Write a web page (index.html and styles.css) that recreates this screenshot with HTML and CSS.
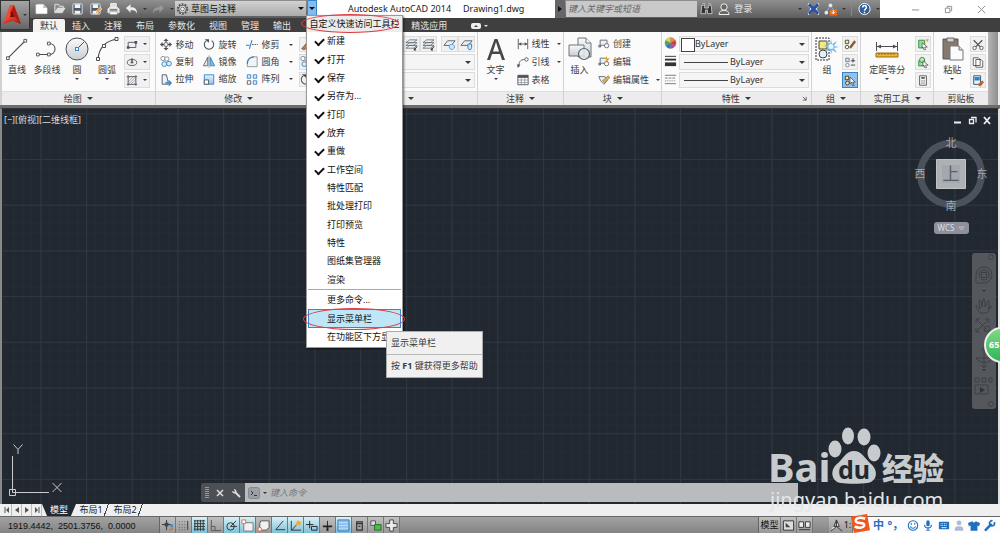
FILE: index.html
```html
<!DOCTYPE html>
<html lang="zh-CN">
<head>
<meta charset="utf-8">
<title>Autodesk AutoCAD 2014 Drawing1.dwg</title>
<link rel="stylesheet" href="styles.css">
</head>
<body>
<svg class="defs" aria-hidden="true">
  <defs>
    <linearGradient id="blue" x2="0" y2="1"><stop offset="0" stop-color="#e6f2fb"/><stop offset="1" stop-color="#8fc4ea"/></linearGradient>
    <linearGradient id="steel" x2="0" y2="1"><stop offset="0" stop-color="#fafafa"/><stop offset="1" stop-color="#c9cdd2"/></linearGradient>
    <linearGradient id="red" x2="1" y2="1"><stop offset="0" stop-color="#f4513a"/><stop offset="1" stop-color="#a3140c"/></linearGradient>
    <symbol id="new" viewBox="0 0 14 14"><path d="M2 2h7l4 4v6H1V3z" fill="#fff" stroke="#ddd" stroke-width=".6"/><path d="M9 2v4h4" fill="#bbb"/></symbol>
    <symbol id="open" viewBox="0 0 14 14"><path d="M2 11V2h4l1 2h4v2" fill="#888" stroke="#e8e8e8"/><path d="M2 11l3-5h8l-3 5z" fill="#d5dce4" stroke="#eee" stroke-width=".6"/></symbol>
    <symbol id="save" viewBox="0 0 14 14"><rect x="2" y="1.500" width="10" height="11" rx="1" fill="#4d5a6c" stroke="#e8e8e8"/><path d="M4 2h6v4H4zM4 9h6v3H4z" fill="#f3f3f3"/></symbol>
    <symbol id="saveas" viewBox="0 0 14 14"><use href="#save"/><path d="M7 12l1-3 4-4 2 2-4 4z" fill="#f2a33a" stroke="#fff" stroke-width=".5"/></symbol>
    <symbol id="print" viewBox="0 0 14 14"><path d="M4 5V1h6v4M3 5h8l2 2v4H1V7z" fill="#ddd" stroke="#fff" stroke-width=".8"/><path d="M3 8h8" stroke="#333"/><path d="M3 10h8v3H3z" fill="#fff" stroke="#777" stroke-width=".5"/></symbol>
    <symbol id="undo" viewBox="0 0 14 14"><path d="M1 6l5-4v3c5 0 7 2 7 7-1-3-3-4-7-4v3z" fill="#e9edf2"/></symbol>
    <symbol id="redo" viewBox="0 0 14 14"><path d="M13 6L8 2v3c-5 0-7 2-7 7 1-3 3-4 7-4v3z" fill="#969696"/></symbol>
    <symbol id="gear" viewBox="0 0 14 14"><circle cx="7" cy="7" r="5" fill="#eee" stroke="#555" stroke-width="2.200" stroke-dasharray="2 1.140"/><circle cx="7" cy="7" r="4" fill="#eee" stroke="#555"/><circle cx="7" cy="7" r="2" fill="#fff" stroke="#666"/></symbol>
    <symbol id="bino" viewBox="0 0 14 14"><path d="M2 3h3v3h4V3h3l1 9H8V8H6v4H1zM3 1h2v2M9 1h2v2" fill="#333" stroke="#ddd" stroke-width=".8"/></symbol>
    <symbol id="user" viewBox="0 0 14 14"><circle cx="7" cy="5" r="3.200" fill="#666" stroke="#eee"/><path d="M2 12.500c0-3 2-4 5-4s5 1 5 4z" fill="#666" stroke="#eee"/></symbol>
    <symbol id="exchange" viewBox="0 0 14 14"><path d="M1 2c5 1 5 9 0 10M13 2c-5 1-5 9 0 10" fill="none" stroke="#e4ecf8" stroke-width="3"/><path d="M2 2l10 10M12 2L2 12" stroke="#2851a0" stroke-width="3"/></symbol>
    <symbol id="share" viewBox="0 0 14 14"><path d="M2 11L7 3l3 5" stroke="#8ab6e8" fill="none"/><circle cx="7" cy="3" r="2" fill="#dce9f8"/><circle cx="2.500" cy="11" r="2" fill="#dce9f8"/><path d="M6 7h8v7H6z" fill="#e86a1c"/><path d="M10 8v4M8 10l2 2 2-2" stroke="#fff" fill="none"/></symbol>
    <symbol id="help" viewBox="0 0 14 14"><circle cx="7" cy="7" r="6" fill="#2e5d9e" stroke="#fff"/><path d="M5 5.500c0-3 4-3 4-.5C9 7 7 7 7 9M7 10v1.500" fill="none" stroke="#fff" stroke-width="1.600"/></symbol>

    <symbol id="line" viewBox="0 0 24 24"><path d="M2 22L21 3" stroke="#4b5056" stroke-width="1.200"/><path d="M.5 20.500h3v3h-3zM19.500 1.500h3v3h-3z" fill="#fff" stroke="#4b5056"/></symbol>
    <symbol id="pline" viewBox="0 0 24 24"><path d="M2 18h12c9 0 9-12 0-12" fill="none" stroke="#4b5056" stroke-width="1.200"/><path d="M.5 16.500h3v3h-3zM12.500 16.500h3v3h-3zM12.500 4.500h3v3h-3z" fill="#fff" stroke="#4b5056"/></symbol>
    <symbol id="circle" viewBox="0 0 24 24"><circle cx="12" cy="12" r="11" fill="url(#steel)" stroke="#4b5056"/><path d="M12 12l7-7" stroke="#4b5056"/><rect x="10.500" y="10.500" width="3" height="3" fill="#fff" stroke="#3b83c4"/></symbol>
    <symbol id="arc" viewBox="0 0 24 24"><path d="M3 22C4 11 10 4 22 2" fill="none" stroke="#4b5056" stroke-width="1.200"/><path d="M1.500 20.500h3v3h-3zM20 .5h3v3h-3zM7.500 7.500h3v3h-3z" fill="#fff" stroke="#4b5056"/></symbol>
    <symbol id="rect" viewBox="0 0 14 14"><path d="M2.500 4.500h9v6h-9z" fill="#edf0f2" stroke="#4b5056"/><path d="M1 9h3v3H1zM10 3h3v3h-3z" fill="#4b5056"/></symbol>
    <symbol id="ellipse" viewBox="0 0 14 14"><ellipse cx="7" cy="7" rx="5.500" ry="3.500" fill="#edf0f2" stroke="#4b5056"/><path d="M7 2v6M5.500 7h3" stroke="#4b5056" stroke-width="1.500"/></symbol>
    <symbol id="hatch" viewBox="0 0 14 14"><path d="M2 5l3-3M2 9l7-7M2 12L12 2M5 12l7-7M9 12l3-3" stroke="#89909a" stroke-width=".8"/><path d="M2.500 1v12M11.500 1v12M1 2.500h12M1 11.500h12" stroke="#4b5056" fill="none"/></symbol>
    <symbol id="move" viewBox="0 0 14 14"><path d="M7 2v10M2 7h10" stroke="#4b5056" stroke-width="1.500"/><path d="M7 0l3 3H4zM7 14l3-3H4zM0 7l3-3v6zM14 7l-3-3v6z" fill="#4b5056"/><path d="M5 5h4v4H5z" fill="#fff" stroke="#4b5056" stroke-width=".7"/></symbol>
    <symbol id="rotate" viewBox="0 0 14 14"><path d="M4 2.500a5.500 5.500 0 1 0 6 0" fill="none" stroke="#4b5056" stroke-width="1.200"/><path d="M2 1h5v4z" fill="#4b5056"/></symbol>
    <symbol id="trim" viewBox="0 0 14 14"><path d="M0 8h4M7 2L4 12" stroke="#2b7fc6" stroke-width="1.200"/><path d="M7 7h7" stroke="#4b5056" stroke-dasharray="2 1"/></symbol>
    <symbol id="copy" viewBox="0 0 14 14"><circle cx="3.500" cy="3.500" r="2.500" fill="#fff" stroke="#7c858d"/><circle cx="8" cy="4" r="2.500" fill="#fff" stroke="#7c858d"/><circle cx="5" cy="10" r="2.800" fill="#d9edfb" stroke="#2b7fc6"/><circle cx="10.500" cy="9.500" r="2.800" fill="#d9edfb" stroke="#2b7fc6"/></symbol>
    <symbol id="mirror" viewBox="0 0 14 14"><path d="M5.500 2v10h-5z" fill="#e9ecee" stroke="#5a636b"/><path d="M8.500 2v10h5z" fill="#7fc0f0" stroke="#2b7fc6"/><path d="M7 0v14" stroke="#4b5056" stroke-width=".7"/></symbol>
    <symbol id="fillet" viewBox="0 0 14 14"><path d="M1.500 13V9c0-5 3-7 7-7.500h4.500V13z" fill="#f1f3f4" stroke="#8a9198"/><path d="M1.500 10c0-5 3-8 8-8.500" fill="none" stroke="#2b7fc6" stroke-width="1.300"/></symbol>
    <symbol id="stretch" viewBox="0 0 14 14"><path d="M2.500 1.500h5l2 9v2h-7z" fill="#e9f3fb" stroke="#4b5056"/><path d="M6 11h6M10 8l3 3-3 3" fill="none" stroke="#2b7fc6" stroke-width="1.500"/></symbol>
    <symbol id="scale" viewBox="0 0 14 14"><path d="M1.500 1.500h11v11h-11z" fill="url(#blue)" stroke="#2b7fc6"/><path d="M1.500 7.500h5v5h-5z" fill="#fff" stroke="#4b5056"/></symbol>
    <symbol id="array" viewBox="0 0 14 14"><path d="M1.500 1.500h4v4h-4zM8.500 1.500h4v4h-4zM8.500 8.500h4v4h-4z" fill="#e0effa" stroke="#2b7fc6"/><path d="M1.500 8.500h4v4h-4z" fill="#fff" stroke="#4b5056"/></symbol>
    <symbol id="pen" viewBox="0 0 14 14"><path d="M2 12l7-8 4 3-8 6z" fill="#d9793b" stroke="#555"/></symbol>
    <symbol id="layer1" viewBox="0 0 14 14"><path d="M1 5l4-3h8L9 5zM1 8l4-3h8L9 8zM1 11l4-3h8l-4 3z" fill="#edf0f2" stroke="#59626a" stroke-width=".8"/><path d="M13 9l-3 4M10 13v-2M10 13h2" stroke="#222"/></symbol>
    <symbol id="layer2" viewBox="0 0 14 14"><path d="M1 8l4-5h8L9 8z" fill="#edf0f2" stroke="#59626a"/><circle cx="9.500" cy="9.500" r="2.800" fill="#cfe7f9" stroke="#2b7fc6" stroke-dasharray="1.500 .7"/></symbol>
    <symbol id="layer3" viewBox="0 0 14 14"><path d="M1 8l4-5h8L9 8z" fill="#edf0f2" stroke="#59626a"/><path d="M8.500 6.500h4v4l-1 2h-2l-1-2z" fill="#cfe7f9" stroke="#2b7fc6"/></symbol>
    <symbol id="textA" viewBox="0 0 24 24"><path d="M3 23L10.500 2h3L21 23h-3l-2-6H8l-2 6zM9 14.500h6L12 5z" fill="#45494e" fill-rule="evenodd"/></symbol>
    <symbol id="linear" viewBox="0 0 14 14"><path d="M1.500 1v12M12.500 1v12M2 7h10" stroke="#4b5056"/><path d="M2 7l3-2v4zM12 7L9 5v4z" fill="#4b5056"/></symbol>
    <symbol id="leader" viewBox="0 0 14 14"><path d="M2 13c0-6 2-9 7-9" fill="none" stroke="#4b5056"/><circle cx="11" cy="4" r="2" fill="#fff" stroke="#4b5056"/><path d="M0 10h4l-3 4z" fill="#4b5056"/></symbol>
    <symbol id="table" viewBox="0 0 14 14"><path d="M1 1.500h12v11H1z" fill="#fff" stroke="#4b5056"/><path d="M1 3h12" stroke="#4b5056" stroke-width="3"/><path d="M1 7h12M1 10h12M5 4v9M9 4v9" stroke="#7c858d" stroke-width=".8"/></symbol>
    <symbol id="insert" viewBox="0 0 24 24"><path d="M10 1h8l5 5v14H10z" fill="url(#steel)" stroke="#6c747c"/><path d="M18 1v5h5" fill="#fff" stroke="#6c747c"/><path d="M1 8h15v11H1z" fill="url(#steel)" stroke="#6c747c"/><circle cx="16" cy="17" r="5.500" fill="#e9ecee" fill-opacity=".8" stroke="#5a636b" stroke-width="1.200"/></symbol>
    <symbol id="create" viewBox="0 0 14 14"><path d="M2.500 2.500h8v6h-8z" fill="#edf0f2" stroke="#5a636b"/><circle cx="10" cy="9" r="2.500" fill="#fff" stroke="#5a636b"/><path d="M1 8.500h2v2H1z" fill="#fff" stroke="#4b5056"/></symbol>
    <symbol id="edit" viewBox="0 0 14 14"><use href="#create"/><path d="M10 0l1 3 3-1-2 3-3 1 0-3z" fill="#f6a823"/></symbol>
    <symbol id="attr" viewBox="0 0 14 14"><path d="M1 3h7l3 4-4 5-4-4z" fill="#edf0f2" stroke="#5a636b"/><path d="M5 8l7-6 2 2-6 6z" fill="#e5b04b" stroke="#555" stroke-width=".6"/></symbol>
    <symbol id="wheel" viewBox="0 0 14 14"><g stroke="#666" stroke-width=".3"><path d="M7 7V1a6 6 0 0 1 5.200 3z" fill="#ef8a35"/><path d="M7 7l5.200-3a6 6 0 0 1 0 6z" fill="#dc3731"/><path d="M7 7l5.200 3A6 6 0 0 1 7 13z" fill="#b048b6"/><path d="M7 7v6a6 6 0 0 1-5.200-3z" fill="#3773c8"/><path d="M7 7l-5.200 3a6 6 0 0 1 0-6z" fill="#3caf5a"/><path d="M7 7L1.800 4A6 6 0 0 1 7 1z" fill="#efd33f"/></g></symbol>
    <symbol id="weight" viewBox="0 0 14 14"><path d="M1 2h12" stroke="#333"/><path d="M1 5.500h12" stroke="#333" stroke-width="2"/><path d="M1 10.500h12" stroke="#333" stroke-width="4"/></symbol>
    <symbol id="ltype" viewBox="0 0 14 14"><path d="M1 3h12M1 12h12" stroke="#777"/><path d="M1 6h12" stroke="#777" stroke-dasharray="3 1"/><path d="M1 9h12" stroke="#777" stroke-dasharray="1 1"/></symbol>
    <symbol id="group" viewBox="0 0 24 24"><path d="M1 1h13v22H1z" fill="none" stroke="#333" stroke-dasharray="2 1"/><path d="M4 4h8v8H4z" fill="#f3ea7b" stroke="#444"/><circle cx="8" cy="17" r="4" fill="#e4eef5" stroke="#444"/><path d="M16 2l1 5 5-3-3 5 5 1-5 1 3 5-5-3-1 5-1-6-5 3 3-5-5-1 5-1-2-5 4 4z" fill="#7fbbe6"/><circle cx="16" cy="9.500" r="2.500" fill="#e9f6ff"/></symbol>
    <symbol id="ungroup" viewBox="0 0 14 14"><path d="M1.500 2h4v4h-4z" fill="#f3ea7b" stroke="#444"/><circle cx="3.500" cy="10" r="2" fill="#fff" stroke="#444"/><path d="M6 10l6-8 2 2-6 8z" fill="#8a5a2b"/></symbol>
    <symbol id="gedit" viewBox="0 0 14 14"><path d="M2 2h4v4H2z" fill="#c9e5f7" stroke="#778"/><circle cx="4" cy="10" r="2" fill="#fff" stroke="#778"/><path d="M8 5h5M10.500 2v5M8 10h5" stroke="#333"/></symbol>
    <symbol id="gsel" viewBox="0 0 14 14"><path d="M1.500 2h4v4h-4z" fill="#f3ea7b" stroke="#333"/><circle cx="4" cy="10" r="2.200" fill="#f3ea7b" stroke="#333"/><path d="M7 3l6 6-3 0 2 4-2 0-1-4-2 2z" fill="#fff" stroke="#333" stroke-width=".8"/></symbol>
    <symbol id="ruler" viewBox="0 0 24 24"><path d="M1.500 5v9M22.500 5v9M2 9.500h20" stroke="#4b5056"/><path d="M2 9.500l4-2v4zM22 9.500l-4-2v4z" fill="#4b5056"/><path d="M1 16h22v4H1z" fill="#f0b62c" stroke="#9a6d10"/><path d="M4 16v2M7 16v2M10 16v2M13 16v2M16 16v2M19 16v2" stroke="#6d4e0d" stroke-width=".7"/></symbol>
    <symbol id="qsel" viewBox="0 0 14 14"><path d="M2 2h7v9H2z" fill="#9bdc9b" stroke="#27893a"/><path d="M6 5l6 5-3 0 1 3-2 0-1-3-1 1z" fill="#fff" stroke="#333" stroke-width=".7"/><path d="M10 1l4 0-2 3z" fill="#f39b22"/></symbol>
    <symbol id="qsel2" viewBox="0 0 14 14"><path d="M2 5h7v6H2z" fill="#9bdc9b" stroke="#27893a"/><circle cx="6" cy="4" r="3" fill="#bce6bc" stroke="#27893a"/><path d="M7 5l6 5-3 0 1 3-2 0-1-3-1 1z" fill="#fff" stroke="#333" stroke-width=".7"/></symbol>
    <symbol id="calc" viewBox="0 0 14 14"><path d="M3 1.500h8v11H3z" fill="#f2f2f2" stroke="#555"/><path d="M5 4h4" stroke="#555" stroke-width="2"/><path d="M5 7.500h4M5 10h4" stroke="#555" stroke-dasharray="1 .5"/></symbol>
    <symbol id="paste" viewBox="0 0 24 24"><path d="M3 2h15v20H3z" fill="#867a70" stroke="#5f5650"/><path d="M7 1h7v4H7z" fill="#cfd3d7" stroke="#666"/><path d="M10 9h9l4 4v10H10z" fill="#fafbfc" stroke="#777"/><path d="M19 9v4h4" fill="#ddd" stroke="#777"/></symbol>
    <symbol id="cut" viewBox="0 0 14 14"><path d="M2 2l8 8M12 2L4 10" stroke="#4b5056" stroke-width="1.400"/><circle cx="3" cy="11" r="2" fill="#fff" stroke="#4b5056"/><circle cx="11" cy="11" r="2" fill="#fff" stroke="#4b5056"/></symbol>
    <symbol id="copyclip" viewBox="0 0 14 14"><path d="M1.500 1.500h6l2 2v7h-8zM4.500 3.500h6l2 2v7h-8z" fill="#fff" stroke="#4b5056"/></symbol>
    <symbol id="match" viewBox="0 0 14 14"><path d="M2 1.500h8v10H2z" fill="#e9f3fb" stroke="#246"/><path d="M3 3h6v4H3z" fill="#2b7fc6"/><path d="M6 12l6-5 2 2-4 5z" fill="#b9662b"/></symbol>
  </defs>
</svg>

<header class="titlebar">
  <nav class="qat">
    <button aria-label="新建"><svg><use href="#new"/></svg></button>
    <button aria-label="打开"><svg><use href="#open"/></svg></button>
    <button aria-label="保存"><svg><use href="#save"/></svg></button>
    <button aria-label="另存为"><svg><use href="#saveas"/></svg></button>
    <button aria-label="打印"><svg><use href="#print"/></svg></button>
    <button aria-label="放弃" class="wide"><svg><use href="#undo"/></svg><i class="tri dark"></i></button>
    <button aria-label="重做" class="wide"><svg><use href="#redo"/></svg><i class="tri dark"></i></button>
  </nav>
  <div class="workspace"><svg><use href="#gear"/></svg><select aria-label="工作空间"><option>草图与注释</option></select><i class="tri"></i></div>
  <button class="customize" aria-label="自定义快速访问工具栏"><i class="tri"></i></button>
  <div class="title"><span>Autodesk AutoCAD 2014</span><span>Drawing1.dwg</span></div>
  <button class="expand" aria-label="展开"><svg viewBox="0 0 6 8"><path d="M1 1v6l4-3z" fill="#111"/></svg></button>
  <input class="search" type="text" placeholder="键入关键字或短语" aria-label="搜索">
  <div class="info">
    <button aria-label="查找"><svg><use href="#bino"/></svg></button>
    <button class="login"><svg><use href="#user"/></svg>登录</button>
    <i class="tri dark"></i>
    <button aria-label="Exchange"><svg><use href="#exchange"/></svg></button>
    <button aria-label="共享"><svg><use href="#share"/></svg></button>
    <i class="tri dark"></i>
    <button class="helpbtn" aria-label="帮助"><svg><use href="#help"/></svg></button>
    <i class="tri dark"></i>
  </div>
  <div class="syswin">
    <button aria-label="最小化"><svg viewBox="0 0 10 10"><path d="M1 5.500h8" stroke="#888"/></svg></button>
    <button aria-label="还原"><svg viewBox="0 0 10 10"><path d="M1.500 3.500h5v5h-5zM3.500 3V1.500h5v5H7" fill="none" stroke="#888"/></svg></button>
    <button aria-label="关闭"><svg viewBox="0 0 10 10"><path d="M1 1l8 8M9 1L1 9" stroke="#888"/></svg></button>
  </div>
</header>
<button class="appbtn" aria-label="应用程序菜单"><svg viewBox="0 0 18 20"><path d="M7 0h4L9 13 0 19z" fill="#ee4a34"/><path d="M11 0l7 19-7-3-4-8z" fill="#b3190f"/><path d="M9 6l-2 6h4z" fill="#6e0a06"/><path d="M0 19l6-7h6l6 7-8-3z" fill="url(#red)"/></svg><i class="tri dark"></i></button>

<nav class="tabs">
  <button class="active">默认</button><button>插入</button><button>注释</button><button>布局</button><button>参数化</button><button>视图</button><button>管理</button><button>输出</button><button class="featured">精选应用</button>
  <button class="mini" aria-label="最小化功能区"><svg viewBox="0 0 10 6"><rect width="10" height="6" rx="2" fill="#eee"/><path d="M3 4h4L5 2z" fill="#444"/></svg><i class="tri"></i></button>
</nav>

<main class="ribbon">
  <section class="panel draw">
    <div class="body">
      <button class="big"><svg><use href="#line"/></svg>直线</button>
      <button class="big"><svg><use href="#pline"/></svg>多段线</button>
      <button class="big"><svg><use href="#circle"/></svg>圆<i class="tri"></i></button>
      <button class="big"><svg><use href="#arc"/></svg>圆弧<i class="tri"></i></button>
      <div class="stack split">
        <button aria-label="矩形"><svg><use href="#rect"/></svg><i class="tri"></i></button>
        <button aria-label="椭圆"><svg><use href="#ellipse"/></svg><i class="tri"></i></button>
        <button aria-label="图案填充"><svg><use href="#hatch"/></svg><i class="tri"></i></button>
      </div>
    </div>
    <footer>绘图<i class="tri"></i></footer>
  </section>
  <section class="panel modify">
    <div class="body grid">
      <button><svg><use href="#move"/></svg>移动</button><button><svg><use href="#rotate"/></svg>旋转</button><button class="more"><svg><use href="#trim"/></svg>修剪<i class="tri"></i></button><button class="framed" aria-label="删除"><svg><use href="#pen"/></svg></button>
      <button><svg><use href="#copy"/></svg>复制</button><button><svg><use href="#mirror"/></svg>镜像</button><button class="more"><svg><use href="#fillet"/></svg>圆角<i class="tri"></i></button><button class="framed" aria-label="分解"><svg><use href="#copy"/></svg></button>
      <button><svg><use href="#stretch"/></svg>拉伸</button><button><svg><use href="#scale"/></svg>缩放</button><button class="more"><svg><use href="#array"/></svg>阵列<i class="tri"></i></button><button class="framed" aria-label="偏移"><svg><use href="#rotate"/></svg></button>
    </div>
    <footer>修改<i class="tri"></i></footer>
  </section>
  <section class="panel layers">
    <div class="body rows">
      <div class="tools"><button aria-label="上一个图层"><svg><use href="#layer1"/></svg></button><button aria-label="图层匹配"><svg><use href="#layer1"/></svg></button><button class="gap" aria-label="图层特性"><svg><use href="#layer2"/></svg></button><button aria-label="关闭图层"><svg><use href="#layer3"/></svg></button></div>
      <div class="combo"><select aria-label="图层状态"><option></option></select><i class="tri"></i></div>
      <div class="combo"><select aria-label="图层"><option></option></select><i class="tri"></i></div>
    </div>
    <footer><i class="tri"></i></footer>
  </section>
  <section class="panel annotate">
    <div class="body">
      <button class="big"><svg><use href="#textA"/></svg>文字<i class="tri"></i></button>
      <div class="stack list">
        <button><svg><use href="#linear"/></svg>线性<i class="tri"></i></button>
        <button><svg><use href="#leader"/></svg>引线<i class="tri"></i></button>
        <button><svg><use href="#table"/></svg>表格</button>
      </div>
    </div>
    <footer>注释<i class="tri"></i></footer>
  </section>
  <section class="panel block">
    <div class="body">
      <button class="big"><svg><use href="#insert"/></svg>插入</button>
      <div class="stack list">
        <button><svg><use href="#create"/></svg>创建</button>
        <button><svg><use href="#edit"/></svg>编辑</button>
        <button><svg><use href="#attr"/></svg>编辑属性<i class="tri"></i></button>
      </div>
    </div>
    <footer>块<i class="tri"></i></footer>
  </section>
  <section class="panel props">
    <div class="body rows">
      <div class="prop"><svg><use href="#wheel"/></svg><div class="combo swatch"><select aria-label="对象颜色"><option>ByLayer</option></select><i class="tri"></i></div></div>
      <div class="prop"><svg><use href="#weight"/></svg><div class="combo ruled"><select aria-label="线宽"><option>ByLayer</option></select><i class="tri"></i></div></div>
      <div class="prop"><svg><use href="#ltype"/></svg><div class="combo ruled"><select aria-label="线型"><option>ByLayer</option></select><i class="tri"></i></div></div>
    </div>
    <footer>特性<i class="tri"></i><svg class="launch" viewBox="0 0 6 6"><path d="M1 1l4 4M5 1v4H1" fill="none" stroke="#555"/></svg></footer>
  </section>
  <section class="panel groups">
    <div class="body">
      <button class="big"><svg><use href="#group"/></svg>组</button>
      <div class="stack"><button aria-label="解除编组"><svg><use href="#ungroup"/></svg></button><button aria-label="组编辑"><svg><use href="#gedit"/></svg></button><button class="on" aria-label="组选择"><svg><use href="#gsel"/></svg></button></div>
    </div>
    <footer>组<i class="tri"></i></footer>
  </section>
  <section class="panel utils">
    <div class="body">
      <button class="big"><svg><use href="#ruler"/></svg>定距等分<i class="tri"></i></button>
      <div class="stack"><button aria-label="快速选择"><svg><use href="#qsel"/></svg></button><button aria-label="全部选择"><svg><use href="#qsel2"/></svg></button><button aria-label="计算器"><svg><use href="#calc"/></svg></button></div>
    </div>
    <footer>实用工具<i class="tri"></i></footer>
  </section>
  <section class="panel clip">
    <div class="body">
      <button class="big"><svg><use href="#paste"/></svg>粘贴<i class="tri"></i></button>
      <div class="stack"><button aria-label="剪切"><svg><use href="#cut"/></svg></button><button aria-label="复制剪裁"><svg><use href="#copyclip"/></svg></button><button aria-label="特性匹配"><svg><use href="#match"/></svg></button></div>
    </div>
    <footer>剪贴板</footer>
  </section>
</main>

<section class="canvas">
  <svg class="gridlines" width="100%" height="100%">
    <defs>
      <pattern id="minor" x="38.300" y="50" width="9.140" height="9.140" patternUnits="userSpaceOnUse"><path d="M.5 0v9.140M0 .5h9.140" stroke="#242b35"/></pattern>
      <pattern id="major" x="38.300" y="50" width="45.700" height="45.700" patternUnits="userSpaceOnUse"><path d="M.5 0v45.700M0 .5h45.700" stroke="#2f3744"/></pattern>
    </defs>
    <rect width="100%" height="100%" fill="url(#minor)"/><rect width="100%" height="100%" fill="url(#major)"/>
  </svg>
  <div class="viewlabel">[−][俯视][二维线框]</div>
  <div class="viewwin">
    <button aria-label="最小化视口"><svg viewBox="0 0 9 9"><path d="M1 6.500h7" stroke="#eee" stroke-width="2"/></svg></button>
    <button aria-label="还原视口"><svg viewBox="0 0 9 9"><path d="M1.500 3.500h4v4h-4zM3 1.500h5v5" fill="none" stroke="#eee" stroke-width="1.300"/></svg></button>
    <button aria-label="关闭视口"><svg viewBox="0 0 9 9"><path d="M1 1l6 7M7 1L1 8" stroke="#eee" stroke-width="1.800"/></svg></button>
  </div>
  <svg class="cube" viewBox="0 0 80 80">
    <circle cx="40" cy="40" r="30.500" fill="none" stroke="#4b525c" stroke-width="7"/>
    <path d="M25.500 25.500h29v29h-29z" fill="#aeb1b4" stroke="#c0c2c4"/><path d="M31 31h18v18H31z" fill="#a2a8ac"/>
    <text x="40" y="46" class="face">上</text>
    <text x="40" y="13">北</text><text x="40" y="76">南</text><text x="9" y="44">西</text><text x="71" y="44">东</text>
  </svg>
  <button class="wcs">WCS<svg viewBox="0 0 7 5"><path d="M1 1h5L3.500 4z" fill="none" stroke="#ccc" stroke-width=".8"/></svg></button>
  <svg class="navbar" viewBox="0 0 24 156">
    <rect width="24" height="156" rx="3" fill="#54585c"/>
    <g fill="none" stroke="#3b4046"><circle cx="19" cy="4" r="2.500"/><circle cx="19" cy="151" r="2.500"/><path d="M4 22a8 8 0 1 1 8 8H4z"/><circle cx="12" cy="22" r="5"/><path d="M9.500 19.500h5v5h-5z"/>
    <path d="M8 60c-2-4-5-6-4-7s3 1 4 3l-1-8c1-2 2-1 3 6l1-8c1-1 2 0 2 8l3-6c1-1 2 0 0 8l3-3c1 1-2 4-4 7z"/>
    <path d="M4 66l13 13M17 66L4 79M4 70v-4h4M13 66h4v4M4 75v4h4"/><circle cx="15" cy="76" r="3"/>
    <path d="M12 95v20M9 98l3-4 3 4M4 105h17M4 105c4 6 12 6 17 0M9 112l3 3 3-3"/>
    <path d="M3 125h4v4H3zM10 125h4v4h-4zM17 125h3v4h-3zM3 132h13v9H3z"/></g>
    <path d="M10 37h4l-2 2zM10 116h4l-2 2zM8 134l5 3-5 3z" fill="#2f3439"/>
  </svg>
  <svg class="ucs" viewBox="0 0 60 56">
    <g fill="none" stroke="#c7cbce"><path d="M8.500 12v36.500H45M5.500 45.500h6v6h-6z"/><path d="M9.500.5l4.500 5 4.500-5M14 5.500V10M48.500 39l9 9M57.500 39l-9 9"/></g>
  </svg>
  <div class="command">
    <span class="grip"></span>
    <button aria-label="关闭命令行"><svg viewBox="0 0 10 10"><path d="M2 2l6 6M8 2L2 8" stroke="#ddd" stroke-width="1.500"/></svg></button>
    <button aria-label="自定义"><svg viewBox="0 0 10 10"><path d="M4 4l5 5" stroke="#ddd" stroke-width="2"/><path d="M3 1l1 3-3-1a2.500 2.500 0 0 0 4 2 2.500 2.500 0 0 0-2-4z" fill="#ddd"/></svg></button>
    <label><svg viewBox="0 0 12 12"><rect x=".5" y=".5" width="11" height="11" rx="2" fill="#9aa0a8" stroke="#83898f"/><path d="M3 4l2 2-2 2M6 8.500h3" fill="none" stroke="#333"/></svg><i class="tri dark"></i><input type="text" placeholder="键入命令" aria-label="命令"></label>
  </div>
  <svg class="watermark" viewBox="0 0 184 92">
    <g class="mark">
      <text x="0" y="56" class="bai">Bai</text>
      <ellipse cx="67" cy="23" rx="6.500" ry="8.500"/><ellipse cx="80" cy="10" rx="6" ry="8.500"/><ellipse cx="96" cy="11" rx="6.500" ry="8.500"/><ellipse cx="106" cy="27" rx="6.500" ry="8.500"/>
      <path d="M86 25c8 0 11 8 17 13 8 7 6 18-4 19-6 1-20 1-26 0-9-1-12-12-4-19 7-6 9-13 17-13z"/>
      <text x="86" y="53" class="du">du</text>
      <text x="114" y="54" class="jingyan">经验</text>
    </g>
    <text x="2" y="81" class="url">jingyan.baidu.com</text>
  </svg>
  <button class="ball">65</button>
</section>

<nav class="layouts">
  <button class="nav" aria-label="第一个"><svg viewBox="0 0 10 10"><path d="M7 2v6L4 5zM2.500 2h1v6h-1z" fill="#555"/></svg></button><button class="nav" aria-label="上一个"><svg viewBox="0 0 10 10"><path d="M7 2v6L3 5z" fill="#555"/></svg></button><button class="nav" aria-label="下一个"><svg viewBox="0 0 10 10"><path d="M3 2v6l4-3z" fill="#555"/></svg></button><button class="nav" aria-label="最后一个"><svg viewBox="0 0 10 10"><path d="M3 2v6l3-3zM6.500 2h1v6h-1z" fill="#555"/></svg></button>
  <button class="model">模型</button><button class="sheet">布局1</button><button class="sheet">布局2</button>
</nav>

<footer class="status">
  <output class="coords">1919.4442,&nbsp; 2501.3756,&nbsp; 0.0000</output>
  <div class="toggles">
    <button aria-label="推断约束"><svg viewBox="0 0 14 14"><path d="M6 1v11M1 6h10" stroke="#333"/><path d="M4 4h4v4H4z" fill="#444"/><path d="M10 6h3v3h-3z" fill="#3a8fd8"/><path d="M9 12l4-2" stroke="#e0512e"/></svg></button>
    <button aria-label="捕捉"><svg viewBox="0 0 14 14"><path d="M2 3h9M2 6h9M2 9h9M2 11.500h10" stroke="#555" stroke-dasharray="1 2"/><path d="M11.500 2v9" stroke="#333"/></svg></button>
    <button class="on" aria-label="栅格"><svg viewBox="0 0 14 14"><path d="M2 1v12M5 1v12M8 1v12M11 1v12M1 2h12M1 5h12M1 8h12M1 11h12" stroke="#333"/></svg></button>
    <button aria-label="正交"><svg viewBox="0 0 14 14"><path d="M2.500 1v11.500H13M2.500 8h4v4" fill="none" stroke="#555"/></svg></button>
    <button class="on" aria-label="极轴"><svg viewBox="0 0 14 14"><circle cx="6" cy="8" r="4" fill="none" stroke="#333"/><path d="M6 8l6-6M6 8h7" stroke="#333"/></svg></button>
    <button class="on" aria-label="对象捕捉"><svg viewBox="0 0 14 14"><path d="M3 4h10v9H3z" fill="#f1f1f1" stroke="#777"/><path d="M1 1h4v4H1z" fill="#fff" stroke="#e86a3b"/></svg></button>
    <button aria-label="三维对象捕捉"><svg viewBox="0 0 14 14"><path d="M4 2h9v7l-3 3H3V5z" fill="#f1f1f1" stroke="#555"/><circle cx="3" cy="11" r="2" fill="#fff" stroke="#e86a3b"/></svg></button>
    <button class="on" aria-label="对象追踪"><svg viewBox="0 0 14 14"><path d="M11 2L3 11.500h10" fill="none" stroke="#333"/></svg></button>
    <button class="on" aria-label="动态 UCS"><svg viewBox="0 0 14 14"><path d="M2.500 2v10H13M3 12l7-8" fill="none" stroke="#333"/><path d="M10 1l1 2 3 0-2 2 0 3-2-2-3 1 1-3z" fill="#f6a823"/></svg></button>
    <button class="on" aria-label="动态输入"><svg viewBox="0 0 14 14"><path d="M5 2v8M1 6h8M7 8h6v4H7z" fill="none" stroke="#222"/></svg></button>
    <button aria-label="线宽显示"><svg viewBox="0 0 14 14"><path d="M7 2v6" stroke="#222"/><path d="M2 8h10M7 8v5" stroke="#222" stroke-width="2"/></svg></button>
    <button class="on" aria-label="透明度"><svg viewBox="0 0 14 14"><path d="M1 1h12v12H1z" fill="#8ebfee" stroke="#3377b8"/><path d="M2 4h10M2 7h10M2 10h10" stroke="#fff" stroke-dasharray="1 1"/></svg></button>
    <button aria-label="快捷特性"><svg viewBox="0 0 14 14"><path d="M4 3h6v9H4zM4 5h6M6 8h2" fill="none" stroke="#333" stroke-width="1.300"/></svg></button>
    <button aria-label="选择循环"><svg viewBox="0 0 14 14"><path d="M2 2h5v5H2z" fill="#ddd" stroke="#555"/><path d="M6 6h7v6H6z" fill="#54b64b" stroke="#27702a"/></svg></button>
    <button aria-label="注释监视器"><svg viewBox="0 0 14 14"><path d="M5 1h4v4h4v4H9v4H5V9H1V5h4z" fill="#eee" stroke="#444"/></svg></button>
  </div>
  <div class="space">
    <button class="txt">模型</button>
    <button aria-label="快速查看布局"><svg viewBox="0 0 14 14"><path d="M1.500 2h11v10h-11z" fill="#ddd" stroke="#333"/><path d="M4 4l5 5H4z" fill="#444"/></svg></button>
    <button aria-label="快速查看图形"><svg viewBox="0 0 14 14"><path d="M1 3h5v6H1zM8 3h5v6H8zM1 11.500h12" fill="#eee" stroke="#333"/></svg></button>
  </div>
  <button class="scale"><svg viewBox="0 0 14 14"><path d="M7 1v7L1 13M7 8l6 5M7 1L4 8h6z" fill="#eee" stroke="#333"/></svg>1:</button>
  <div class="ime">
    <svg class="sogou" viewBox="0 0 22 20"><path d="M2 3L19 0l3 17L5 20z" fill="#f2561f"/><path d="M17 5c-5-2-10-1-10 2 0 4 10 1 9 5-1 3-7 3-10 1" fill="none" stroke="#fff" stroke-width="2.600"/></svg>
    <button>中</button>
    <button>°，</button>
    <button aria-label="表情"><svg viewBox="0 0 14 14"><circle cx="7" cy="7" r="5.500" fill="none" stroke="#1f70c1" stroke-width="1.300"/><path d="M5 4v2M9 4v2M4 8c1 3 5 3 6 0" fill="none" stroke="#1f70c1" stroke-width="1.200"/></svg></button>
    <button aria-label="语音"><svg viewBox="0 0 14 14"><rect x="5" y="1" width="4" height="7" rx="2" fill="#1f70c1"/><path d="M3 6c0 5 8 5 8 0M7 10v3M5 12.500h4" fill="none" stroke="#1f70c1" stroke-width="1.300"/></svg></button>
    <button aria-label="键盘"><svg viewBox="0 0 14 14"><rect x="1" y="2.500" width="12" height="9" rx="1" fill="#1f70c1"/><path d="M3 5h8M3 7h8" stroke="#fff" stroke-dasharray="1 1"/><path d="M4 9.500h6" stroke="#fff"/></svg></button>
    <button aria-label="账户"><svg viewBox="0 0 14 14"><circle cx="7" cy="4" r="2.800" fill="#a9bbd6"/><path d="M2 13c0-4 1-5 5-5s5 1 5 5z" fill="#a9bbd6"/></svg></button>
    <button aria-label="皮肤"><svg viewBox="0 0 14 14"><path d="M5 2c1 2 3 2 4 0l5 2-1 4-2-1v6H3V7L1 8 0 4z" fill="#1f70c1"/></svg></button>
    <button aria-label="工具箱"><svg viewBox="0 0 14 14"><path d="M2 12l6-6" stroke="#1f70c1" stroke-width="3" stroke-linecap="round"/><path d="M12 3a3 3 0 1 1-2-1.500" fill="none" stroke="#1f70c1" stroke-width="2"/></svg></button>
  </div>
</footer>

<div class="menu" role="menu">
  <h2>自定义快速访问工具栏</h2>
  <div class="group main">
    <button class="checked">新建</button><button class="checked">打开</button><button class="checked">保存</button><button class="checked">另存为...</button><button class="checked">打印</button><button class="checked">放弃</button><button class="checked">重做</button><button class="checked">工作空间</button><button>特性匹配</button><button>批处理打印</button><button>打印预览</button><button>特性</button><button>图纸集管理器</button><button>渲染</button>
  </div>
  <div class="group extra">
    <button>更多命令...</button><button class="hot">显示菜单栏</button><button class="cutoff">在功能区下方显示</button>
  </div>
</div>
<div class="tooltip" role="tooltip"><p>显示菜单栏</p><p>按 <b>F1</b> 键获得更多帮助</p></div>
<div class="ring top"></div>
<div class="ring low"></div>
</body>
</html>
```
FILE: styles.css
```css
* { box-sizing: border-box; }
body {
  margin: 0; height: 100vh; display: flex; flex-direction: column; position: relative; overflow: hidden;
  font: 9px/12px "Noto Sans", "Noto Sans CJK SC", sans-serif; color: #3a3a3a; background: #6c6c6c;
}
button, input, select { font: inherit; color: inherit; border: 0; background: none; padding: 0; margin: 0; min-width: 0; }
button { display: flex; align-items: center; justify-content: center; white-space: nowrap; }
select { appearance: none; }
svg { display: block; flex: none; }
.defs { position: absolute; width: 0; height: 0; }
.tri { flex: none; border: 3px solid transparent; border-top-color: currentColor; border-bottom: 0; }
.tri.dark { border-width: 2px; border-bottom: 0; border-top-color: #333; }

/* Title bar */
.titlebar { flex: none; height: 18px; display: flex; align-items: stretch; background: linear-gradient(#8f8f8f, #5d5d5d); }
.titlebar svg { width: 13px; height: 14px; }
.qat { display: flex; align-items: center; width: 175px; padding-left: 35px; gap: 5px; }
.qat .wide { gap: 5px; }
.qat button { flex: none; }
.workspace { position: relative; display: flex; align-items: center; gap: 2px; width: 131px; margin: 1px 1px 2px 0; padding-left: 1px; background: linear-gradient(#d2d2d2, #aaa); color: #111; }
.workspace select { flex: 1; }
.workspace .tri { position: absolute; right: 2px; top: 6px; }
.customize { width: 10px; margin-bottom: 2px; background: #7fbcf0; border: 1px solid #3b86c8; color: #111; }
.title { flex: 1; display: flex; align-items: center; gap: 12px; padding-left: 31px; background: #fff; color: #222; white-space: nowrap; }
.expand { width: 10px; background: #666; }
.titlebar .expand svg { width: 6px; height: 8px; }
.search { width: 131px; margin: 1px; padding-left: 2px; background: #c9c9c9; color: #555; font-style: italic; }
.search::placeholder { color: #666; }
.info { width: 182px; display: flex; align-items: center; gap: 5px; padding-left: 2px; color: #e8e8e8; }
.info .login { gap: 3px; margin-right: 41px; }
.info .login svg { width: 14px; }
.info .helpbtn { border-left: 1px solid #888; padding-left: 6px; }
.syswin { width: 120px; display: flex; align-items: center; justify-content: space-between; padding: 0 14px 0 31px; background: #fff; }
.syswin svg { width: 9px; height: 9px; }
.appbtn { position: absolute; left: 0; top: 0; width: 30px; height: 30px; gap: 2px; border: 1px solid #333; background: linear-gradient(#a5a5a5, #666); z-index: 2; }
.appbtn svg { width: 18px; height: 20px; }

/* Ribbon tabs */
.tabs { flex: none; height: 14px; display: flex; background: #3f3f3f; padding: 1px 0 0 33px; color: #e6e6e6; }
.tabs button { padding: 0 7px; }
.tabs .active { background: #f2f2f2; color: #333; border-radius: 2px 2px 0 0; }
.tabs .featured { margin-left: 106px; }
.tabs .mini { margin-left: 10px; gap: 3px; }
.tabs .mini svg { width: 10px; height: 6px; }
.tabs .mini .tri { border-width: 2px; border-bottom: 0; }

/* Ribbon */
.ribbon { flex: none; display: flex; gap: 1px; padding: 0 10px 0 2px; background: linear-gradient(90deg, #b5b5b5, #8f8f8f) right / 10px 100% no-repeat, #d2d2d2; border-right: 2px solid #eee; }
.panel { display: flex; flex-direction: column; background: #fbfbfb; min-width: 0; }
.draw { flex: 153; } .modify { flex: 167; } .layers { flex: 154; } .annotate { flex: 86; } .block { flex: 97; }
.props { flex: 149; } .groups { flex: 49; } .utils { flex: 72; } .clip { flex: 54; }
.body { height: 59px; padding: 4px 2px 3px; display: flex; min-width: 0; }
.panel footer { height: 14px; display: flex; align-items: center; justify-content: center; gap: 5px; background: #ececec; border-top: 1px solid #dedede; position: relative; }
.layers footer { padding-left: 22px; }
.launch { position: absolute; right: 4px; top: 4px; width: 5px; height: 5px; }
.big { width: 30px; flex-direction: column; justify-content: flex-start; padding-top: 1px; line-height: 12px; }
.big svg { width: 24px; height: 24px; margin-bottom: 3px; }
.big .tri, .stack .tri, .more .tri { border-width: 2px; border-bottom: 0; }
.big .tri { margin-top: 2px; }
.draw .body { padding-left: 0; }
.draw .big:nth-child(1) svg, .draw .big:nth-child(2) svg { width: 22px; }
.stack { margin-left: auto; display: grid; grid-template-rows: repeat(3, 1fr); row-gap: 2px; }
.stack button { width: 16px; background: #f1f1f1; border: 1px solid #ddd; }
.stack svg { width: 12px; height: 13px; }
.split { margin-right: 3px; }
.stack.split button { width: 26px; gap: 5px; }
.stack button.on { background: #8fc2f0; border-color: #3d82c4; }
.list { margin-left: 5px; }
.stack.list button { width: auto; background: none; border: 0; justify-content: flex-start; gap: 3px; }
.list svg { width: 12px; height: 12px; }
.list .tri { margin-left: 4px; }
.grid { display: grid; grid-template-columns: 43px 43px 53px 16px; grid-template-rows: repeat(3, 1fr); padding-left: 4px; }
.grid button { justify-content: flex-start; gap: 4px; }
.grid svg { width: 12px; height: 13px; }
.grid .more .tri { margin-left: 5px; }
.grid .framed { background: #f1f1f1; border: 1px solid #ddd; margin: 1px 0; }
.rows { display: grid; grid-template-rows: repeat(3, 1fr); row-gap: 2px; }
.tools { display: flex; justify-content: flex-end; }
.tools button { width: 17px; background: #f1f1f1; border: 1px solid #ddd; }
.tools .gap { margin-left: 4px; }
.tools svg { width: 13px; height: 13px; }
.combo { position: relative; display: flex; flex: 1; background: #f5f5f5; border: 1px solid #dcdcdc; min-width: 0; }
.combo select { flex: 1; }
.combo .tri { position: absolute; right: 3px; top: 6px; }
.prop { display: flex; align-items: stretch; gap: 2px; }
.prop > svg { width: 13px; height: 14px; }
.prop select { padding-left: 50px; color: #333; }
.ruled select { background: linear-gradient(#444, #444) 4px 7px / 44px 1px no-repeat; }
.prop .swatch select { padding-left: 15px; }
.swatch::before { content: ""; position: absolute; left: 1px; top: 1px; width: 12px; height: 12px; background: #fff; border: 1px solid #444; }
.groups .big { width: 27px; } .utils .big { width: 48px; } .clip .big { width: 32px; }
.annotate .big { width: 32px; } .block .big { width: 27px; }

/* Drawing area */
.canvas { flex: 1; min-height: 0; position: relative; margin: 3px 0 0; border-left: 2px solid #8a8a8a; border-top: 1px solid #333; border-right: 2px solid #dfdfdf; background: #212830; }
.gridlines { position: absolute; inset: 0; }
.viewlabel { position: absolute; left: 2px; top: 5px; color: #d8dadc; }
.viewwin { position: absolute; right: 6px; top: 7px; display: flex; gap: 6px; }
.viewwin svg { width: 9px; height: 9px; }
.cube { position: absolute; right: 7px; top: 25px; width: 80px; height: 80px; fill: #a3a7ab; font-size: 11px; text-anchor: middle; }
.cube .face { font-size: 17px; fill: #596068; }
.wcs { position: absolute; right: 29px; top: 113px; width: 35px; height: 12px; border-radius: 3px; background: #8e919b; color: #dcdde0; font-size: 8px; gap: 4px; }
.wcs svg { width: 7px; height: 5px; }
.navbar { position: absolute; right: 2px; top: 144px; width: 24px; height: 156px; }
.ucs { position: absolute; left: 2px; bottom: 4px; width: 60px; height: 56px; }
.command { position: absolute; left: 199px; right: 200px; bottom: 2px; height: 19px; display: flex; align-items: center; gap: 6px; padding-left: 4px; background: #4c4f53; border-radius: 2px; }
.command svg { width: 10px; height: 10px; }
.grip { width: 4px; height: 12px; background: repeating-linear-gradient(#999 0 1px, #4c4f53 1px 2px); }
.command label { flex: 1; align-self: stretch; display: flex; align-items: center; gap: 3px; padding-left: 3px; background: #b9bbbd; }
.command label svg { width: 12px; height: 12px; }
.command button + label { margin-left: -2px; }
.command input { flex: 1; font-style: italic; }
.command input::placeholder { color: #777; }
.watermark { position: absolute; right: 46px; bottom: -14px; width: 184px; height: 92px; z-index: 1; overflow: visible; }
.mark { fill: #c8cbcd; }
.bai { font: bold 40px "Noto Sans", sans-serif; }
.du { font: bold 25px "Noto Sans", sans-serif; fill: #212830; text-anchor: middle; }
.jingyan { font: 900 31px "Noto Sans CJK SC", sans-serif; }
.url { font: 20px "Noto Sans", sans-serif; fill: #e4e6e7; }
.ball { position: absolute; right: -22px; top: 218px; width: 36px; height: 36px; justify-content: flex-start; padding-left: 3px; border: 2px solid #eee; border-radius: 50%; background: linear-gradient(#7fda86, #2fb556); color: #fff; font-weight: bold; }

/* Layout tabs */
.layouts { flex: none; height: 12px; display: flex; background: #efefef; padding-left: 2px; color: #222; }
.layouts .nav { width: 10px; border-right: 1px solid #bbb; }
.layouts .nav svg { width: 10px; height: 10px; }
.layouts .model { width: 34px; background: #212830; color: #fff; clip-path: polygon(0 0, 100% 0, 85% 100%, 15% 100%); }
.layouts .sheet { width: 34px; padding-right: 4px; background: linear-gradient(110deg, transparent 30px, #444 30px 31px, transparent 31px); }

/* Status bar */
.status { flex: none; height: 17px; display: flex; align-items: stretch; border-top: 1px solid #666; background: linear-gradient(#a2a2a2, #848484); color: #111; }
.coords { width: 159px; padding: 4px 0 0 8px; font-family: "Liberation Sans", sans-serif; line-height: 11px; white-space: nowrap; }
.toggles { display: flex; border-left: 1px solid #666; }
.status button { border-right: 1px solid #777; background: linear-gradient(#c0c0c0, #989898); }
.toggles button { width: 16px; }
.status .toggles .on { background: linear-gradient(#d9f1f8, #7fc0d6); }
.toggles svg, .space svg, .scale svg { width: 13px; height: 13px; }
.space { display: flex; margin-left: auto; margin-right: 16px; border-left: 1px solid #666; }
.space button { width: 16px; }
.space .txt { width: 22px; }
.status .scale { width: 24px; gap: 1px; }
.ime { position: relative; width: 147px; display: flex; align-items: center; justify-content: space-between; padding: 0 4px 0 20px; background: #fdfdfd; z-index: 1; }
.status .ime button { background: none; border: 0; color: #1f70c1; font-size: 11px; font-weight: bold; }
.ime button svg { width: 12px; height: 13px; }
.ime .sogou { position: absolute; left: -4px; bottom: 0; width: 21px; height: 19px; }

/* Quick access menu */
.menu { position: absolute; left: 306px; top: 15px; width: 97px; height: 333px; display: flex; flex-direction: column; background: #fff; border: 1px solid #999; color: #111; z-index: 3; box-shadow: 1px 1px 2px #0008; }
.menu h2 { height: 16px; margin: 0; font: inherit; line-height: 16px; text-align: center; white-space: nowrap; background: #ececec; }
.group { display: flex; flex-direction: column; }
.group button { flex: 1; position: relative; justify-content: flex-start; padding-left: 20px; overflow: hidden; }
.main { height: 257px; }
.extra { flex: 1; margin: 0 1px; padding: 1px 0; border-top: 1px solid #aaa; }
.group.extra button { padding-left: 19px; }
.group.extra .cutoff { margin-right: 15px; }
.checked::before { content: ""; position: absolute; left: 8px; top: 6px; width: 7px; height: 4px; border: 2px solid #111; border-width: 0 0 2px 2px; rotate: -45deg; }
.group .hot { background: #bfe6f7; border: 1px solid #3a86d4; }
.group.extra .hot { padding-left: 18px; }
.tooltip { position: absolute; left: 386px; top: 331px; width: 97px; background: #f0f0f0; border: 1px solid #aaa; z-index: 4; white-space: nowrap; }
.tooltip p { margin: 0; padding: 5px 4px; }
.tooltip p + p { border-top: 1px solid #bbb; }
.ring { position: absolute; border: 1px solid #e03a40; border-radius: 50%; z-index: 5; }
.ring.top { left: 301px; top: 14px; width: 98px; height: 19px; }
.ring.low { left: 303px; top: 308px; width: 102px; height: 22px; }
```
